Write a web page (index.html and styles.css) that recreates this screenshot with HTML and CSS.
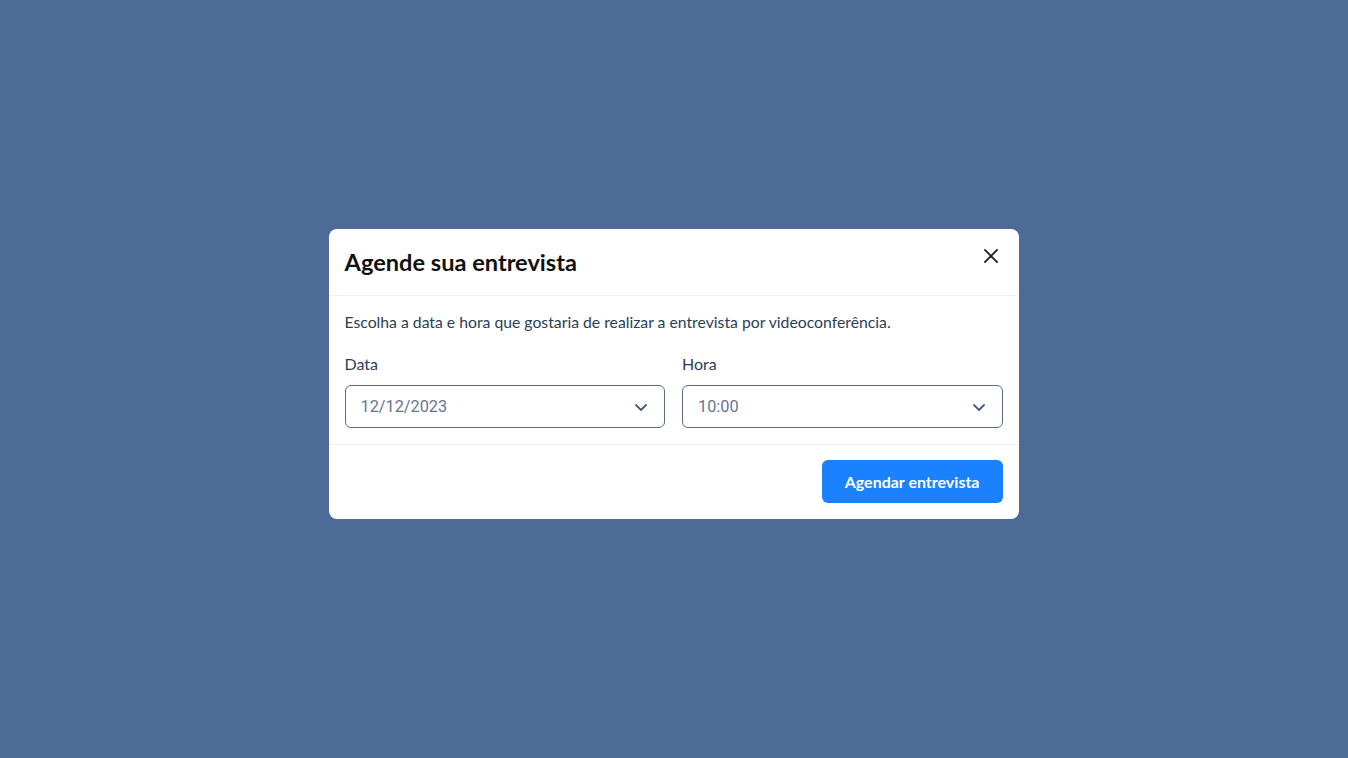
FILE: index.html
```html
<!DOCTYPE html>
<html lang="pt-BR">
<head>
    <meta charset="UTF-8">
    <meta name="viewport" content="width=device-width, initial-scale=1.0">
    <title>Agende sua entrevista</title>
    <link rel="stylesheet" href="styles.css">
</head>
<body>
    <div class="overlay">
        <div class="modal">
            <div class="modal-header">
                <h2>Agende sua entrevista</h2>
                <button class="close" aria-label="Fechar">
                    <svg width="16" height="16" viewBox="0 0 16 16">
                        <path d="M2 2 L14 14 M14 2 L2 14" stroke="#1f2937" stroke-width="1.8" stroke-linecap="round"/>
                    </svg>
                </button>
            </div>
            <div class="modal-body">
                <p>Escolha a data e hora que gostaria de realizar a entrevista por videoconferência.</p>
                <div class="fields">
                    <div class="field">
                        <label>Data</label>
                        <div class="select">
                            <span>12/12/2023</span>
                            <svg width="14" height="14" viewBox="0 0 14 14">
                                <path d="M2 5 L7 10 L12 5" fill="none" stroke="#4a5a70" stroke-width="1.8" stroke-linecap="round" stroke-linejoin="round"/>
                            </svg>
                        </div>
                    </div>
                    <div class="field">
                        <label>Hora</label>
                        <div class="select">
                            <span>10:00</span>
                            <svg width="14" height="14" viewBox="0 0 14 14">
                                <path d="M2 5 L7 10 L12 5" fill="none" stroke="#4a5a70" stroke-width="1.8" stroke-linecap="round" stroke-linejoin="round"/>
                            </svg>
                        </div>
                    </div>
                </div>
            </div>
            <div class="modal-footer">
                <button class="primary">Agendar entrevista</button>
            </div>
        </div>
    </div>
</body>
</html>
```

FILE: styles.css
```css
body {
    margin: 0;
    font-family: 'Lato', 'Noto Sans', sans-serif;
    background: #4e6a97;
    height: 100vh;
}
.overlay {
    height: 100%;
    display: flex;
    justify-content: center;
    align-items: center;
}
.modal {
    width: 690px;
    background: #fff;
    border-radius: 8px;
    margin-top: -10px;
    margin-left: -1px;
}
.modal-header {
    display: flex;
    justify-content: space-between;
    align-items: center;
    padding: 16px;
    border-bottom: 1px solid #eef0f3;
}
.modal-header h2 {
    margin: 0;
    font-size: 23.6px;
    line-height: 34px;
    font-weight: 700;
    color: #111;
}
.close {
    border: none;
    background: none;
    padding: 0;
    margin-top: -13px;
    margin-right: 4px;
    cursor: pointer;
    display: flex;
}
.modal-body {
    padding: 14px 16px 16px;
    border-bottom: 1px solid #eef0f3;
}
.modal-body p {
    margin: 0 0 18px;
    font-size: 15.75px;
    line-height: 24px;
    color: #2c3e55;
}
.fields {
    display: grid;
    grid-template-columns: 1fr 1fr;
    gap: 17px;
}
.field label {
    display: block;
    font-size: 16px;
    line-height: 24px;
    color: #2c3e55;
    margin-bottom: 9px;
}
.select {
    height: 43px;
    box-sizing: border-box;
    border: 1px solid #5b6b82;
    border-radius: 6px;
    padding: 0 16px 0 15px;
    display: flex;
    align-items: center;
    justify-content: space-between;
    font-family: 'Roboto', sans-serif;
    font-size: 16.3px;
    color: #66768c;
}
.modal-footer {
    padding: 15px 16px 16px;
    display: flex;
    justify-content: flex-end;
}
.primary {
    height: 43px;
    padding: 0 23px;
    border: none;
    border-radius: 6px;
    background: #1a82ff;
    color: #fff;
    font-family: 'Lato', sans-serif;
    font-size: 16px;
    font-weight: 700;
    cursor: pointer;
}
```
